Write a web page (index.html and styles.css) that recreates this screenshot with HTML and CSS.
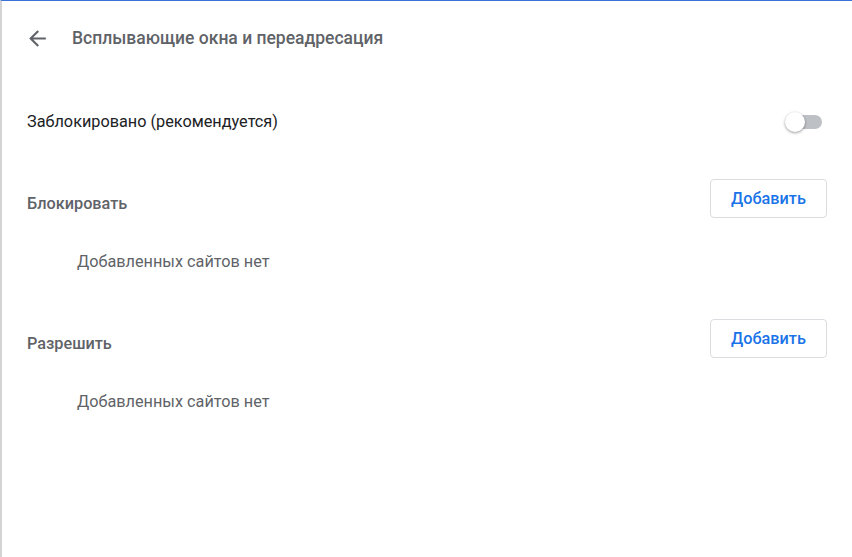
FILE: index.html
```html
<!DOCTYPE html>
<html lang="ru">
<head>
<meta charset="utf-8">
<link rel="stylesheet" href="styles.css">
</head>
<body>
<div class="page">
  <header class="header">
    <svg class="back" viewBox="0 0 24 24" width="25" height="25"><path d="M20 11H7.83l5.59-5.59L12 4l-8 8 8 8 1.41-1.41L7.83 13H20v-2z" fill="#5f6368"/></svg>
    <h1 class="title">Всплывающие окна и переадресация</h1>
  </header>
  <div class="toggle-row">
    <span class="toggle-label">Заблокировано (рекомендуется)</span>
    <span class="toggle"><span class="track"></span><span class="knob"></span></span>
  </div>
  <section class="section">
    <div class="sec-head">
      <h2 class="sec-title">Блокировать</h2>
      <button class="btn">Добавить</button>
    </div>
    <div class="empty">Добавленных сайтов нет</div>
  </section>
  <section class="section">
    <div class="sec-head">
      <h2 class="sec-title">Разрешить</h2>
      <button class="btn">Добавить</button>
    </div>
    <div class="empty">Добавленных сайтов нет</div>
  </section>
</div>
</body>
</html>
```
FILE: styles.css
```css
html, body {
  margin: 0;
  padding: 0;
  height: 100%;
  background: #fff;
}
body {
  font-family: Roboto, "Noto Sans", sans-serif;
  font-size: 16.25px;
  line-height: 20px;
  color: #202124;
}
.page {
  box-sizing: border-box;
  min-height: 100%;
  border-left: 2px solid #d4d4d4;
  border-top: 1px solid #3a72d8;
  padding: 0 25px;
}
.header {
  display: flex;
  align-items: center;
  height: 74px;
}
.back {
  display: block;
  margin-left: -2px;
}
.title {
  margin: 0 0 0 22px;
  font-size: 17.5px;
  font-weight: 500;
  color: #5f6368;
  line-height: 20px;
}
.toggle-row {
  display: flex;
  align-items: center;
  justify-content: space-between;
  padding: 37px 0 47px 0;
}
.toggle-label {
  color: #202124;
}
.toggle {
  position: relative;
  width: 37px;
  height: 20px;
  margin-right: 5px;
}
.track {
  position: absolute;
  left: 1px;
  top: 3px;
  width: 36px;
  height: 14px;
  border-radius: 7px;
  background: #bdc1c6;
}
.knob {
  position: absolute;
  left: 0;
  top: 0;
  width: 20px;
  height: 20px;
  border-radius: 50%;
  background: #fff;
  box-shadow: 0 1px 3px rgba(0, 0, 0, 0.4);
}
.section {
  padding-bottom: 47px;
}
.sec-head {
  display: flex;
  align-items: center;
  justify-content: space-between;
}
.sec-title {
  margin: 0;
  padding-top: 10px;
  font-size: 16.25px;
  font-weight: 500;
  color: #5f6368;
  line-height: 20px;
}
.btn {
  box-sizing: border-box;
  width: 117px;
  height: 39px;
  border: 1px solid #dadce0;
  border-radius: 4px;
  background: #fff;
  font-family: Roboto, "Noto Sans", sans-serif;
  font-size: 16.25px;
  font-weight: 500;
  color: #1a73e8;
  padding: 0;
}
.empty {
  padding: 34px 0 0 50px;
  color: #5f6368;
}
```
